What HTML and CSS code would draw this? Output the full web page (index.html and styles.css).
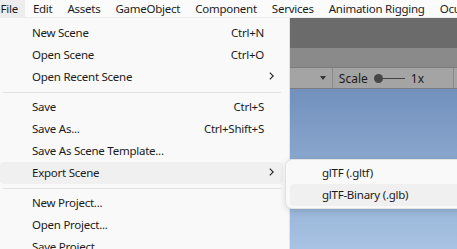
FILE: index.html
```
<!DOCTYPE html>
<html lang="en">
<head>
    <meta charset="UTF-8">
    <meta name="viewport" content="width=device-width, initial-scale=1.0">
    <title>Editor - File menu</title>
    <link rel="stylesheet" href="styles.css">
</head>
<body>
    <div class="menubar">
        <span class="menubar-item active">File</span>
        <span class="menubar-item">Edit</span>
        <span class="menubar-item">Assets</span>
        <span class="menubar-item">GameObject</span>
        <span class="menubar-item">Component</span>
        <span class="menubar-item">Services</span>
        <span class="menubar-item">Animation Rigging</span>
        <span class="menubar-item">Ocu</span>
    </div>

    <div class="workspace">
        <div class="band-dark"></div>
        <div class="band-mid"></div>
        <div class="toolbar">
            <span class="dropdown-arrow"></span>
            <div class="scale-group">
                <span>Scale</span>
                <span class="slider"><span class="knob"></span></span>
                <span>1x</span>
            </div>
        </div>
        <div class="scene"></div>

        <!-- File menu -->
        <div class="menu">
            <div class="menu-item"><span class="label">New Scene</span><span class="shortcut">Ctrl+N</span><span class="arrow"></span></div>
            <div class="menu-item"><span class="label">Open Scene</span><span class="shortcut">Ctrl+O</span><span class="arrow"></span></div>
            <div class="menu-item"><span class="label">Open Recent Scene</span><span class="arrow"><svg width="5" height="8" viewBox="0 0 5 8"><path d="M0.8 0.6 L4.2 4 L0.8 7.4" fill="none" stroke="#222" stroke-width="1.1"/></svg></span></div>
            <div class="menu-sep"></div>
            <div class="menu-item"><span class="label">Save</span><span class="shortcut">Ctrl+S</span><span class="arrow"></span></div>
            <div class="menu-item"><span class="label">Save As...</span><span class="shortcut">Ctrl+Shift+S</span><span class="arrow"></span></div>
            <div class="menu-item"><span class="label">Save As Scene Template...</span><span class="arrow"></span></div>
            <div class="menu-item hover"><span class="label">Export Scene</span><span class="arrow"><svg width="5" height="8" viewBox="0 0 5 8"><path d="M0.8 0.6 L4.2 4 L0.8 7.4" fill="none" stroke="#222" stroke-width="1.1"/></svg></span></div>
            <div class="menu-sep"></div>
            <div class="menu-item"><span class="label">New Project...</span><span class="arrow"></span></div>
            <div class="menu-item"><span class="label">Open Project...</span><span class="arrow"></span></div>
            <div class="menu-item"><span class="label">Save Project</span><span class="arrow"></span></div>
        </div>

        <div class="submenu">
            <div class="menu-item"><span class="label">glTF (.gltf)</span></div>
            <div class="menu-item hover"><span class="label">glTF-Binary (.glb)</span></div>
        </div>
    </div>
</body>
</html>
```

FILE: styles.css
```
* {
    box-sizing: border-box;
}

body {
    margin: 0;
    width: 457px;
    height: 249px;
    overflow: hidden;
    font-family: 'Noto Sans', 'Open Sans', sans-serif;
    font-size: 11.5px;
    letter-spacing: -0.25px;
    color: #1b1b1b;
    background-color: #f9f9f9;
}

.menubar {
    display: flex;
    height: 18px;
    margin-left: -7px;
    background-color: #fbfbfb;
    border-bottom: 1px solid #ececec;
    white-space: nowrap;
    overflow: hidden;
}

.menubar-item {
    display: flex;
    align-items: center;
    padding: 0 7.5px 1px;
    line-height: 17px;
}

.menubar-item.active {
    background-color: #ededed;
}

.workspace {
    position: relative;
    height: 231px;
    display: flex;
    flex-direction: column;
}

.band-dark {
    height: 30px;
    background-color: #6b6b6b;
}

.band-mid {
    height: 19px;
    background-color: #8a8a8a;
}

.toolbar {
    height: 22px;
    display: flex;
    align-items: center;
    justify-content: flex-end;
    background-color: #a4a4a4;
    border-top: 1px solid #7c7c7c;
    border-bottom: 1px solid #7c7c7c;
    padding-right: 3px;
    color: #1a1a1a;
    font-size: 12px;
    letter-spacing: 0;
}

.dropdown-arrow {
    width: 0;
    height: 0;
    border-left: 3px solid transparent;
    border-right: 3px solid transparent;
    border-top: 4px solid #333;
    margin-right: 6px;
}

.scale-group {
    display: flex;
    align-items: center;
    height: 100%;
    padding: 0 29px 0 6px;
    border-left: 1px solid #8a8a8a;
    border-right: 1px solid #8a8a8a;
}

.slider {
    position: relative;
    width: 30px;
    height: 1px;
    margin: 0 6px 0 7px;
    background-color: #444;
}

.knob {
    position: absolute;
    left: -1px;
    top: -4px;
    width: 9px;
    height: 9px;
    border-radius: 50%;
    background-color: #474747;
}

.scene {
    flex: 1;
    background: linear-gradient(to bottom, #7190bc, #a8c3e3);
}

.menu {
    position: absolute;
    left: -4px;
    top: 0;
    width: 294px;
    height: 240px;
    padding: 4px 6px 0 4px;
    background-color: #f9f9f9;
    border-right: 1px solid #e2e2e2;
}

.menu-item {
    display: flex;
    align-items: center;
    height: 22px;
    padding: 0 9px 2px 32px;
    border-radius: 4px;
    white-space: nowrap;
}

.menu-item.hover {
    background-color: #f0f0f0;
}

.menu-item .label {
    flex: 1;
}

.menu-item .arrow {
    width: 10px;
    display: flex;
    justify-content: flex-end;
}

.menu-sep {
    height: 8px;
    display: flex;
    align-items: center;
    padding: 0 2px 0 3px;
}

.menu-sep::after {
    content: '';
    flex: 1;
    height: 1px;
    background-color: #e1e1e1;
}

.submenu {
    position: absolute;
    left: 285px;
    top: 141px;
    width: 200px;
    padding: 2px 4px;
    background-color: #f9f9f9;
    border: 1px solid #e3e3e3;
    border-radius: 7px;
    box-shadow: 0 2px 6px rgba(0, 0, 0, 0.12);
}
```
